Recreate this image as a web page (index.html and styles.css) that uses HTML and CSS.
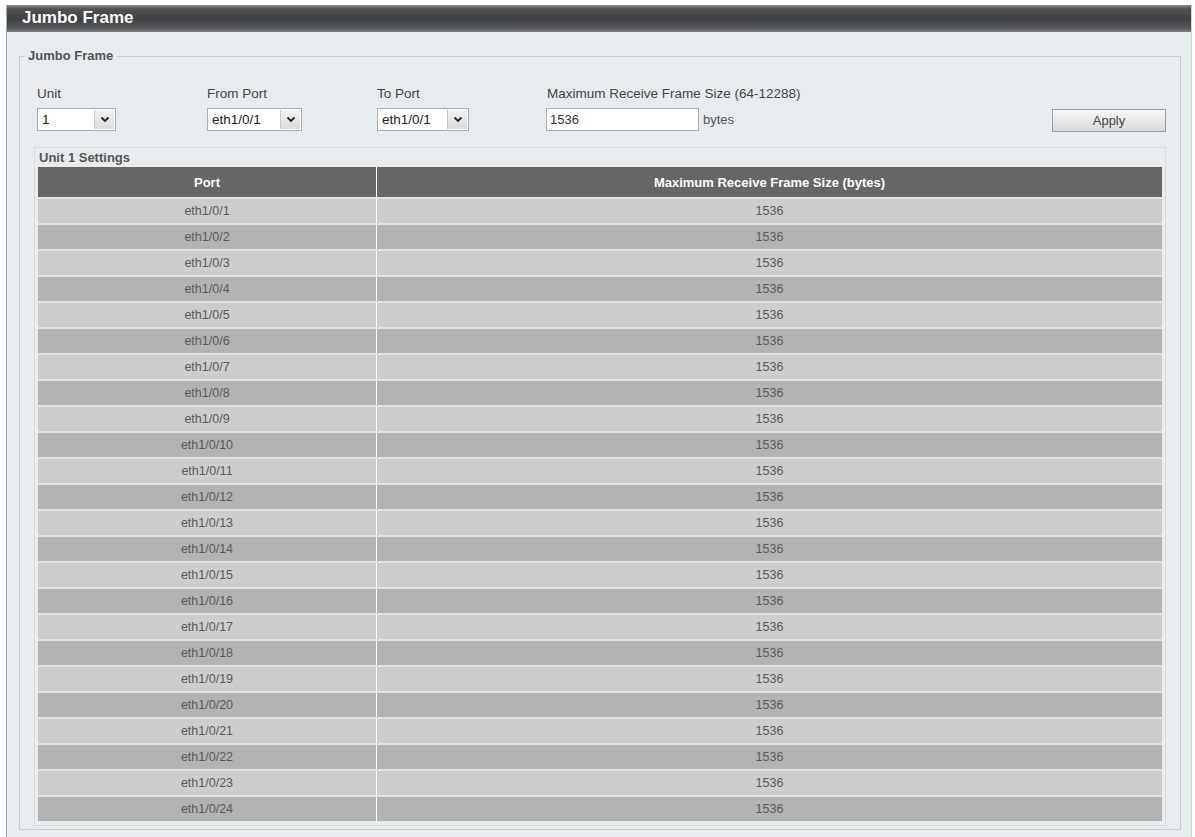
FILE: index.html
```html
<!DOCTYPE html>
<html lang="en">
  <head>
    <meta charset="UTF-8" />
    <title>Jumbo Frame</title>
    <link rel="stylesheet" href="styles.css">
  </head>
  <body>
    <div class="page">
      <div class="title-bar">Jumbo Frame</div>

      <fieldset class="group">
        <legend>Jumbo Frame</legend>

        <div class="form-row">
          <div class="field">
            <label>Unit</label>
            <span class="select unit-select">
              <select><option>1</option></select>
              <span class="arrow"><svg width="10" height="7" viewBox="0 0 10 7"><path d="M1.5 1.5 L5 5 L8.5 1.5" fill="none" stroke="#222" stroke-width="1.8"/></svg></span>
            </span>
          </div>
          <div class="field">
            <label>From Port</label>
            <span class="select from-select">
              <select><option>eth1/0/1</option></select>
              <span class="arrow"><svg width="10" height="7" viewBox="0 0 10 7"><path d="M1.5 1.5 L5 5 L8.5 1.5" fill="none" stroke="#222" stroke-width="1.8"/></svg></span>
            </span>
          </div>
          <div class="field">
            <label>To Port</label>
            <span class="select to-select">
              <select><option>eth1/0/1</option></select>
              <span class="arrow"><svg width="10" height="7" viewBox="0 0 10 7"><path d="M1.5 1.5 L5 5 L8.5 1.5" fill="none" stroke="#222" stroke-width="1.8"/></svg></span>
            </span>
          </div>
          <div class="field wide">
            <label>Maximum Receive Frame Size (64-12288)</label>
            <div class="size-row">
              <input class="size-input" type="text" value="1536" />
              <span class="unit-text">bytes</span>
            </div>
          </div>
          <button class="apply">Apply</button>
        </div>

        <div class="settings">
          <div class="settings-title">Unit 1 Settings</div>
          <table class="ports">
            <thead>
              <tr>
                <th class="port-col">Port</th>
                <th>Maximum Receive Frame Size (bytes)</th>
              </tr>
            </thead>
            <tbody id="rows"></tbody>
          </table>
        </div>
      </fieldset>
    </div>

    <script>
      // fill the port table
      const rows = document.getElementById("rows");
      for (let i = 1; i <= 24; i++) {
        const tr = document.createElement("tr");
        tr.innerHTML = "<td>eth1/0/" + i + "</td><td>1536</td>";
        rows.appendChild(tr);
      }
    </script>
  </body>
</html>
```

FILE: styles.css
```css
body {
  margin: 0;
  padding: 0;
  background: #ffffff;
  font-family: "Liberation Sans", Arial, sans-serif;
  overflow: hidden;
}
.page {
  margin: 5px 3px 0 6px;
  height: 832px;
  background: #e7edef;
  border-left: 1px solid #8fb2b2;
  border-right: 1px solid #c9d5d8;
}
.title-bar {
  height: 27px;
  line-height: 25px;
  padding-left: 15px;
  color: #ffffff;
  font-size: 17px;
  font-weight: bold;
  background: linear-gradient(to bottom, #8c8e90 0, #505254 14%, #3e4042 50%, #55585a 85%, #7d8082 100%);
}
.group {
  margin: 16px 10px 0 12px;
  padding: 22px 14px 3px 14px;
  border: 1px solid #c5cfd2;
}
.group legend {
  margin-left: -10px;
  padding: 0 4px;
  font-size: 13px;
  line-height: 16px;
  font-weight: bold;
  color: #555;
}
.form-row {
  display: flex;
  align-items: flex-start;
  padding-left: 3px;
  height: 61px;
}
.field {
  width: 170px;
  display: flex;
  flex-direction: column;
  gap: 6px;
}
.field.wide {
  width: 300px;
}
.field label {
  font-size: 13.5px;
  line-height: 16px;
  color: #444;
}
.select {
  position: relative;
  display: inline-block;
  height: 23px;
}
.unit-select {
  width: 79px;
}
.from-select {
  width: 95px;
}
.to-select {
  width: 92px;
}
.select select {
  appearance: none;
  -webkit-appearance: none;
  width: 100%;
  height: 23px;
  box-sizing: border-box;
  border: 1px solid #a6b0b6;
  background: #ffffff;
  font-family: "Liberation Sans", Arial, sans-serif;
  font-size: 13.5px;
  color: #222;
  padding: 0 0 0 4px;
  border-radius: 0;
}
.select .arrow {
  position: absolute;
  top: 2px;
  right: 2px;
  width: 19px;
  height: 19px;
  background: linear-gradient(to bottom, #f2f2f2, #dcdcdc);
  border-left: 1px solid #c8c8c8;
  display: flex;
  align-items: center;
  justify-content: center;
}
.size-row {
  display: flex;
  align-items: center;
  gap: 4px;
}
.size-input {
  width: 153px;
  height: 23px;
  box-sizing: border-box;
  margin: 0 0 0 -1px;
  border: 1px solid #a6b0b6;
  padding: 0 3px;
  font-family: "Liberation Sans", Arial, sans-serif;
  font-size: 13px;
  color: #333;
}
.unit-text {
  font-size: 13px;
  color: #555;
}
.apply {
  margin: 23px 0 0 auto;
  width: 114px;
  height: 23px;
  border: 1px solid #9a9fa2;
  background: linear-gradient(to bottom, #f7f7f7, #dadada);
  font-family: "Liberation Sans", Arial, sans-serif;
  font-size: 13px;
  color: #444;
}
.settings {
  border: 1px solid #d4dcdf;
  padding: 0 3px 4px 3px;
}
.settings-title {
  font-size: 13px;
  font-weight: bold;
  line-height: 19px;
  color: #555;
  padding-left: 1px;
}
.ports {
  width: 100%;
  border-collapse: collapse;
  font-size: 12.5px;
}
.ports th {
  height: 28px;
  background: #666666;
  color: #ffffff;
  font-weight: bold;
  font-size: 13px;
  border-left: 1px solid #ffffff;
}
.ports th.port-col {
  width: 336px;
  border-left: none;
}
.ports td {
  height: 24px;
  text-align: center;
  color: #5a5a5a;
  border-top: 2px solid #e2e2e2;
  border-left: 1px solid #ffffff;
  background: #cdcdcd;
  padding: 0;
}
.ports td:first-child {
  border-left: none;
}
.ports tr:nth-child(even) td {
  background: #b3b3b3;
}
```
